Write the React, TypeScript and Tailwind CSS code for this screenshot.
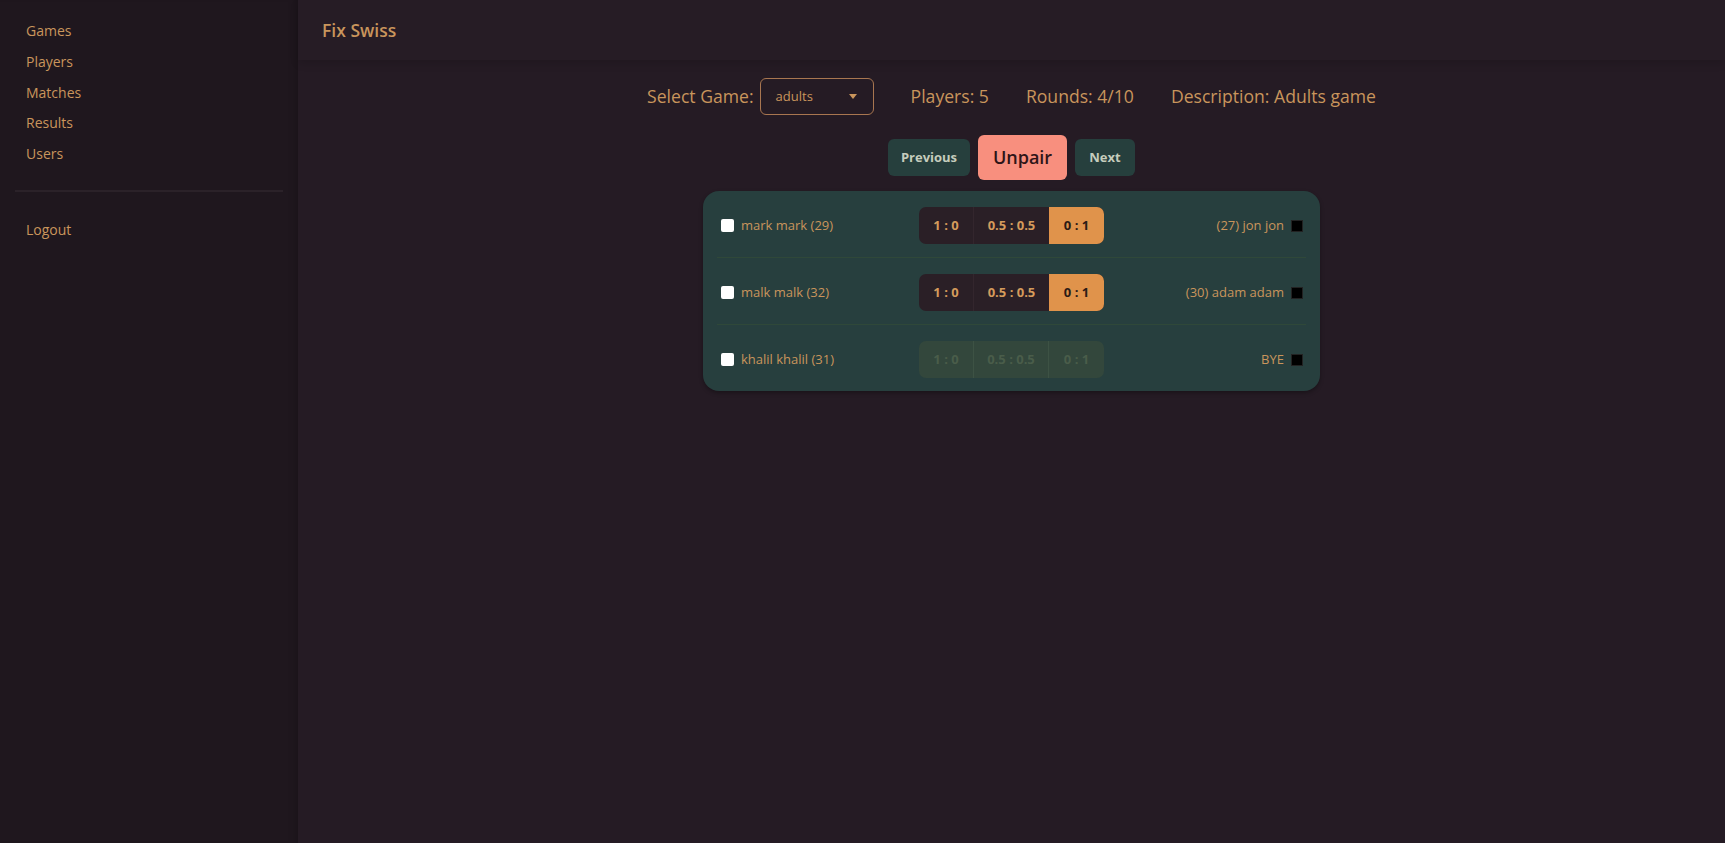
import React from "react";

const tan = "text-[#c9955c]";

function Score({ disabled }: { disabled?: boolean }) {
  if (disabled) {
    return (
      <div className="flex h-[37px] w-[185px] rounded-[7px] bg-[#33473c] text-[13px] font-bold text-[#4a5d4a]">
        <div className="flex w-[55px] items-center justify-center border-r border-[#3d5244]">1 : 0</div>
        <div className="flex w-[75px] items-center justify-center border-r border-[#3d5244]">0.5 : 0.5</div>
        <div className="flex w-[55px] items-center justify-center">0 : 1</div>
      </div>
    );
  }
  return (
    <div className="flex h-[37px] w-[185px] overflow-hidden rounded-[7px] bg-[#2a1f26] text-[13px] font-bold text-[#d49b5c]">
      <div className="flex w-[55px] items-center justify-center border-r border-[#33262d]">1 : 0</div>
      <div className="flex w-[75px] items-center justify-center">0.5 : 0.5</div>
      <div className="flex w-[55px] items-center justify-center bg-[#e0934b] text-[#2b1b16]">0 : 1</div>
    </div>
  );
}

function Row({ left, right, disabled, last }: { left: string; right: string; disabled?: boolean; last?: boolean }) {
  return (
    <div className={`flex items-center pt-[16px] ${last ? "pb-[13px]" : "pb-[13px] border-b border-[#2f4839]"}`}>
      <div className="flex w-[202px] items-center gap-[7px] pl-[4px]">
        <span className="block h-[13px] w-[13px] rounded-[2px] bg-white" />
        <span className={`text-[13px] ${tan}`}>{left}</span>
      </div>
      <Score disabled={disabled} />
      <div className="flex flex-1 items-center justify-end gap-[7px] pr-[3px]">
        <span className={`text-[13px] ${tan}`}>{right}</span>
        <span className="block h-[12px] w-[12px] border border-[#222] bg-black" />
      </div>
    </div>
  );
}

export default function App() {
  return (
    <div
      className="flex h-[843px] w-full overflow-hidden bg-[#251b24]"
      style={{ fontFamily: '"Open Sans", "Noto Sans", sans-serif' }}
    >
      <aside className="flex w-[298px] shrink-0 flex-col bg-[#1f171e] shadow-[inset_-8px_0_10px_-8px_rgba(0,0,0,0.25)]">
        <nav className="flex flex-col px-[26px] pt-[20px]">
          {["Games", "Players", "Matches", "Results", "Users"].map((t) => (
            <div key={t} className={`h-[30.8px] text-[14px] leading-[22px] ${tan}`}>
              {t}
            </div>
          ))}
        </nav>
        <div className="mx-[15px] mt-[16px] h-[2px] bg-[#2b2229]" />
        <div className={`px-[26px] pt-[27px] text-[14px] leading-[22px] ${tan}`}>Logout</div>
      </aside>
      <main className="flex flex-1 flex-col">
        <header className="flex h-[60px] items-center bg-[#261c25] px-[24px] shadow-[0_4px_8px_rgba(0,0,0,0.12)]">
          <h1 className={`text-[17.5px] font-semibold ${tan}`}>Fix Swiss</h1>
        </header>
        <div className="flex flex-col items-center pt-[18px]">
          <div className={`flex items-center text-[17.6px] ${tan}`}>
            <span>Select Game:</span>
            <div className="ml-[6px] flex h-[37px] w-[114px] items-center justify-between rounded-[6px] border border-[#a87650] pl-[15px] pr-[16px]">
              <span className="text-[13px]">adults</span>
              <svg width="8" height="5" viewBox="0 0 8 5">
                <path d="M0 0 L8 0 L4 5 Z" fill="#c9955c" />
              </svg>
            </div>
            <span className="ml-[37px]">Players: 5</span>
            <span className="ml-[37px]">Rounds: 4/10</span>
            <span className="ml-[37px]">Description: Adults game</span>
          </div>
          <div className="mt-[20px] flex items-center gap-[8px]">
            <button className="h-[37px] w-[82px] rounded-[6px] bg-[#263f3d] text-[13px] font-bold text-[#c5ccbc]">Previous</button>
            <button className="h-[45px] w-[89px] rounded-[6px] bg-[#f88f7e] text-[18px] font-semibold text-[#2e1518]">Unpair</button>
            <button className="h-[37px] w-[60px] rounded-[6px] bg-[#263f3d] text-[13px] font-bold text-[#c5ccbc]">Next</button>
          </div>
          <div className="mt-[11px] w-[617px] rounded-[16px] bg-[#273f3e] px-[14px] shadow-[0_2px_4px_rgba(0,0,0,0.3)]">
            <Row left="mark mark (29)" right="(27) jon jon" />
            <Row left="malk malk (32)" right="(30) adam adam" />
            <Row left="khalil khalil (31)" right="BYE" disabled last />
          </div>
        </div>
      </main>
    </div>
  );
}
